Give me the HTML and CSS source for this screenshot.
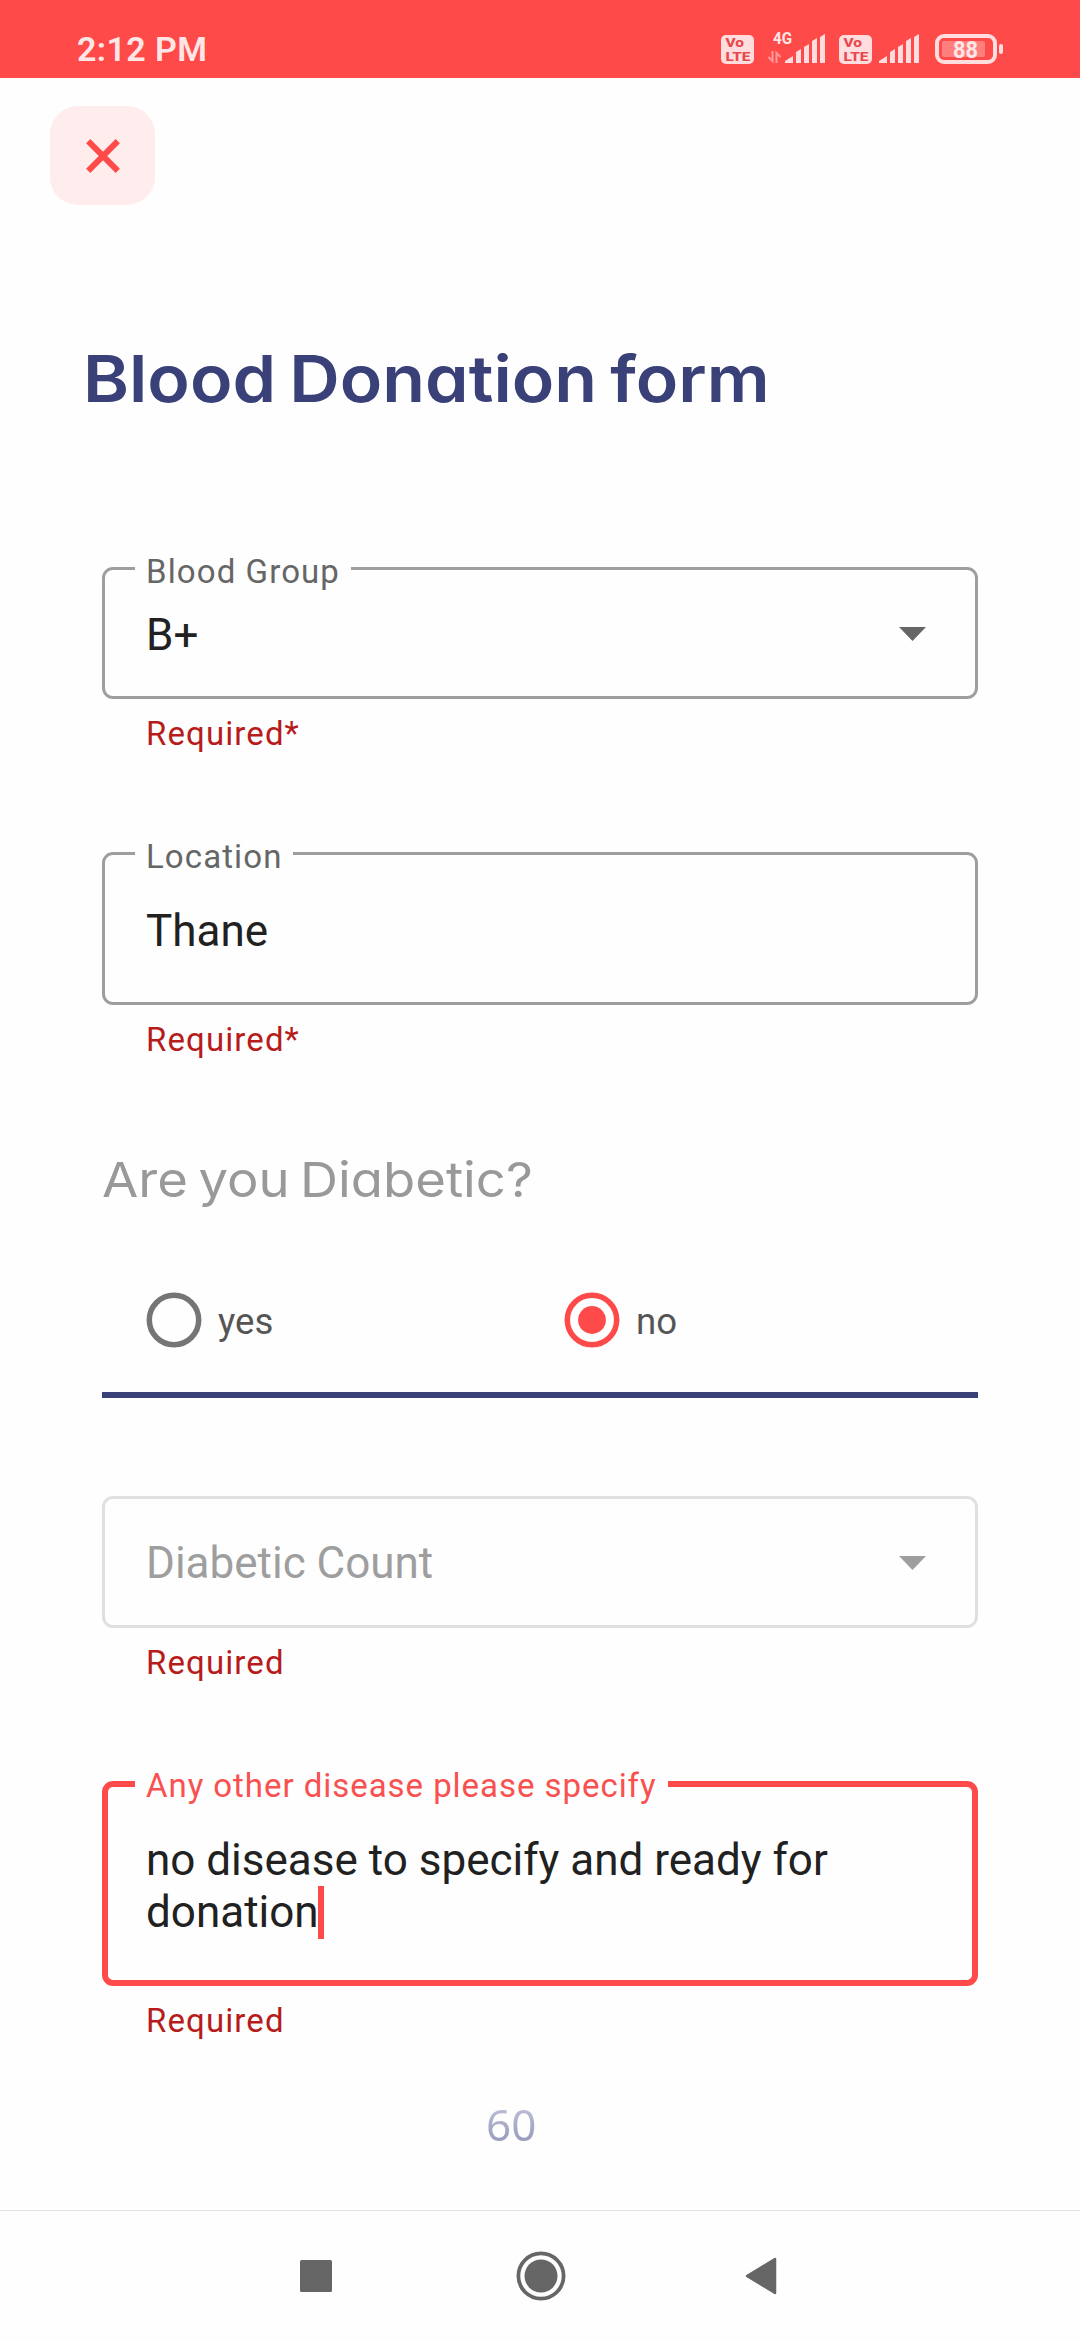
FILE: index.html
```html
<!DOCTYPE html>
<html lang="en">
<head>
<meta charset="utf-8">
<title>Blood Donation form</title>
<link rel="stylesheet" href="styles.css">
</head>
<body>
<div class="screen">
  <header class="status">
    <span class="time">2:12 PM</span>
    <svg class="status-icons" width="286" height="48" viewBox="0 -12 286 48">
      <g fill="#ffdcdd">
        <rect x="1" y="3" width="33" height="29" rx="5"/>
        <rect x="119" y="3" width="33" height="29" rx="5"/>
        <path id="bars" d="M65 31v-2l8-5v7zM76 31V20l5-3v14zM84 31V15l5-3v19zM92 31V9l5-3v25zM100 31V5l5-3v29z"/>
        <use href="#bars" x="94"/>
        <rect x="279" y="12" width="4" height="10" rx="2"/>
      </g>
      <path d="M52.500 19v10l-4-4M56.500 31V21l4 4" fill="none" stroke="#ff9a9a" stroke-width="2"/>
      <rect x="217" y="4" width="58" height="26" rx="7" fill="none" stroke="#ffdcdd" stroke-width="4"/>
      <rect x="222" y="9" width="43" height="16" rx="2" fill="#ff7f7f"/>
      <text class="net" x="53" y="12" textLength="19" lengthAdjust="spacingAndGlyphs">4G</text>
      <g class="volte">
        <text x="5.500" y="15" textLength="18.500" lengthAdjust="spacingAndGlyphs">Vo</text>
        <text x="5.500" y="28.500" textLength="25" lengthAdjust="spacingAndGlyphs">LTE</text>
        <text x="123.500" y="15" textLength="18.500" lengthAdjust="spacingAndGlyphs">Vo</text>
        <text x="123.500" y="28.500" textLength="25" lengthAdjust="spacingAndGlyphs">LTE</text>
      </g>
      <text class="charge" x="233" y="26" textLength="25" lengthAdjust="spacingAndGlyphs">88</text>
    </svg>
  </header>

  <button class="close" aria-label="Close">
    <svg width="34" height="34" viewBox="0 0 34 34"><path d="M2.200 2.200l29.600 29.600M31.800 2.200L2.200 31.800" stroke="#ff4a4a" stroke-width="6"/></svg>
  </button>

  <h1 class="title">Blood Donation form</h1>

  <main class="form">
    <fieldset class="field group">
      <legend class="label">Blood Group</legend>
      <span class="value">B+</span>
      <svg class="arrow" width="27" height="14" viewBox="0 0 27 14"><path d="M0 0h27L13.500 14z"/></svg>
    </fieldset>
    <p class="helper">Required*</p>

    <fieldset class="field location">
      <legend class="label">Location</legend>
      <span class="value">Thane</span>
    </fieldset>
    <p class="helper">Required*</p>

    <h2 class="question">Are you Diabetic?</h2>
    <div class="choices">
      <label class="choice"><svg width="56" height="56" viewBox="0 0 56 56"><circle cx="28" cy="28" r="24.700" fill="none" stroke="#757575" stroke-width="5.500"/></svg><span>yes</span></label>
      <label class="choice"><svg width="56" height="56" viewBox="0 0 56 56"><circle cx="28" cy="28" r="24.700" fill="none" stroke="#ff4a4a" stroke-width="5.500"/><circle cx="28" cy="28" r="13.900" fill="#ff4a4a"/></svg><span>no</span></label>
    </div>

    <div class="field disabled">
      <span class="value">Diabetic Count</span>
      <svg class="arrow" width="27" height="14" viewBox="0 0 27 14"><path d="M0 0h27L13.500 14z"/></svg>
    </div>
    <p class="helper">Required</p>

    <fieldset class="field focused">
      <legend class="label">Any other disease please specify</legend>
      <span class="value">no disease to specify and ready for<br>donation<i class="caret"></i></span>
    </fieldset>
    <p class="helper">Required</p>
    <div class="count">60</div>
  </main>

  <nav class="nav">
    <svg width="32" height="32" viewBox="0 0 32 32"><rect width="32" height="32" rx="1.500"/></svg>
    <svg width="50" height="50" viewBox="0 0 50 50"><circle cx="25" cy="25" r="22.600" fill="none" stroke="#666" stroke-width="3.800"/><circle cx="25" cy="25" r="16.500"/></svg>
    <svg width="32" height="38" viewBox="0 0 32 38"><path d="M2 19L30 2v34z" stroke="#666" stroke-width="2.500" stroke-linejoin="round"/></svg>
  </nav>
</div>
</body>
</html>
```
FILE: styles.css
```css
* { box-sizing: border-box; margin: 0; padding: 0; }

body {
  background: #fefefe;
  font-family: Roboto, "Liberation Sans", sans-serif;
  color: #212121;
}

.screen {
  display: flex;
  flex-direction: column;
  width: 1080px;
  height: 2340px;
  overflow: hidden;
}

.status {
  display: flex;
  justify-content: space-between;
  height: 78px;
  padding: 20px 74px 0 77px;
  background: #ff4a4a;
}

.time {
  margin-top: 12px;
  color: #ffe6e6;
  font-size: 34px;
  line-height: 34px;
  font-weight: 600;
  letter-spacing: 0.4px;
}

.status-icons { overflow: visible; }
.net { font-size: 16.5px; font-weight: 700; fill: #ffe6e6; }
.volte { font-size: 13.5px; font-weight: 800; fill: #e8484c; }
.charge { font-size: 23px; font-weight: 700; fill: #ffe6e6; }

.close {
  display: flex;
  align-items: center;
  justify-content: center;
  flex: none;
  width: 105px;
  height: 99px;
  margin: 28px 0 0 50px;
  border: 0;
  border-radius: 28px;
  background: #ffeded;
}

.title {
  align-self: flex-start;
  height: 90px;
  margin: 129px 0 0 83px;
  color: #3a4078;
  font: 600 65px/90px Inter, sans-serif;
  font-feature-settings: "cv11";
  word-spacing: -4px;
  white-space: nowrap;
  transform: scaleX(1.075);
  transform-origin: left;
}

.form {
  display: flex;
  flex-direction: column;
  flex: 1;
  width: 876px;
  margin: 124px 0 0 102px;
}

.field {
  display: flex;
  flex: none;
  align-items: flex-start;
  justify-content: space-between;
  min-width: 0;
  width: 876px;
  border: 3px solid #9e9e9e;
  border-radius: 11px;
}

.group { height: 151px; padding: 20px 49px 0 41px; }
.group .arrow { margin-top: 18px; }
.location { height: 172px; margin-top: 79px; padding: 31px 41px 0; }

.label {
  height: 41px;
  margin-left: -11px;
  padding: 0 11px;
  color: #666;
  font-size: 33px;
  line-height: 48px;
  letter-spacing: 1.1px;
}

.value {
  font-size: 44px;
  line-height: 52px;
  white-space: nowrap;
}

.helper {
  flex: none;
  height: 40px;
  margin: 15px 0 0 44px;
  color: #b71c1c;
  font-size: 33px;
  line-height: 40px;
  letter-spacing: 1.1px;
}

.arrow { fill: #666; }

.question {
  align-self: flex-start;
  height: 60px;
  margin-top: 90px;
  color: #999;
  font: 400 48.5px/60px Inter, sans-serif;
  font-feature-settings: "cv11";
  word-spacing: -4px;
  white-space: nowrap;
  transform: scaleX(1.085);
  transform-origin: left;
}

.choices {
  display: grid;
  grid-template-columns: 418px 1fr;
  align-items: start;
  height: 188px;
  padding: 82px 0 0 44px;
  border-bottom: 6px solid #3a4078;
}

.choice {
  display: flex;
  align-items: center;
  gap: 16px;
  height: 56px;
  color: #555;
  font-size: 36.6px;
}
.choice span { padding-top: 3px; }

.disabled {
  align-items: center;
  height: 132px;
  margin-top: 98px;
  padding: 1px 49px 0 41px;
  border-color: #e0e0e0;
}
.disabled .value { color: #9e9e9e; }
.disabled .arrow { fill: #9e9e9e; }

.focused {
  height: 222px;
  margin-top: 81px;
  padding: 30px 38px 0;
  border: 6px solid #ff4a4a;
}
.focused .label {
  height: 40px;
  color: #f95050;
  line-height: 43px;
  letter-spacing: 0.95px;
}

.caret {
  display: inline-block;
  width: 6px;
  height: 53px;
  margin: 0 0 -12px -1px;
  vertical-align: baseline;
  background: #ff4a4a;
}

.count {
  align-self: flex-start;
  margin: 57px 0 0 384px;
  font: 400 44px/52px "Noto Sans", sans-serif;
  color: transparent;
  background: linear-gradient(#c4c7da, #8f94b8);
  background-clip: text;
}

.nav {
  display: flex;
  align-items: center;
  flex: none;
  height: 130px;
  padding-left: 300px;
  border-top: 1px solid #e2e2e2;
  fill: #666;
}
.nav svg:nth-child(2) { margin-left: 184px; }
.nav svg:nth-child(3) { margin-left: 179px; }
```
